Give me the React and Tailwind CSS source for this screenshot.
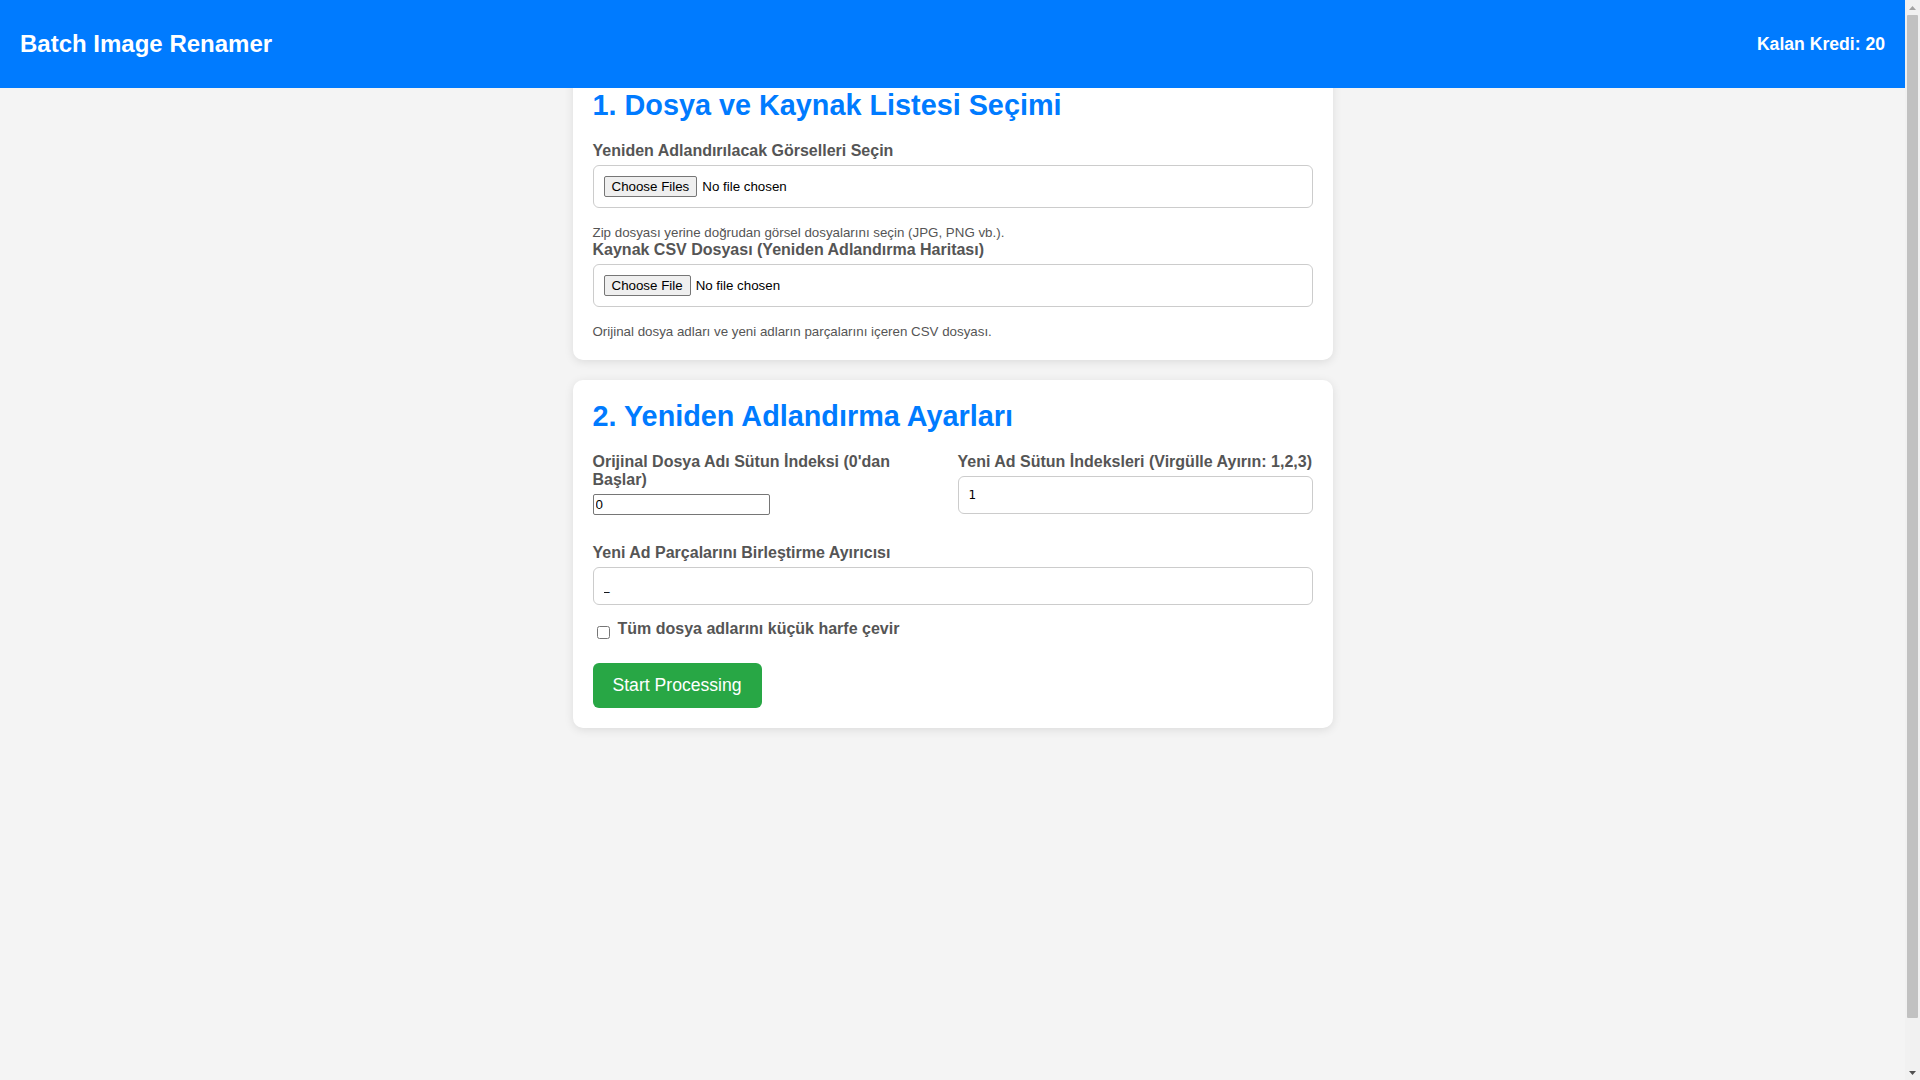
import { useState } from "react";

const labelCls = "block mb-[5px] text-[16px] font-bold text-[#555]";
const textInputCls =
  "block w-full mb-[15px] p-[10px] bg-white border border-[#ccc] rounded-[6px] text-[12px] leading-[16px] text-black font-['DejaVu_Sans',sans-serif] outline-none";
const fileInputCls =
  "block w-full mb-[15px] p-[10px] bg-white border border-[#ccc] rounded-[6px] text-[13.33px] text-black font-['Liberation_Sans',Arial,sans-serif] file:mr-[5px] file:px-[7px] file:py-[2px] file:border file:border-[#767676] file:rounded-[2px] file:bg-[#efefef] file:text-black file:text-[13.33px]";

function Help({ children }) {
  return (
    <div className="text-[16px]">
      <small className="text-[13.33px] text-[#555]">{children}</small>
    </div>
  );
}

function Card({ title, children }) {
  return (
    <section className="bg-white rounded-[10px] p-[20px] shadow-[0_2px_10px_rgba(0,0,0,0.1)]">
      <h2 className="mb-[20px] text-[28.8px] font-bold text-[#007bff]">{title}</h2>
      {children}
    </section>
  );
}

// page scrollbar, as the browser shows it when the page is taller than the window
function Scrollbar() {
  return (
    <div className="fixed top-0 right-0 z-20 w-[15px] h-screen bg-[#f1f1f1] flex flex-col items-center">
      <div className="h-[15px] flex items-center justify-center">
        <svg width="7" height="4" viewBox="0 0 7 4">
          <path d="M0 4 L3.5 0 L7 4 Z" fill="#a3a3a3" />
        </svg>
      </div>
      <div className="w-[11px] h-[1003px] rounded-[1px] bg-[#c1c1c1]" />
      <div className="flex-1" />
      <div className="h-[15px] flex items-center justify-center">
        <svg width="7" height="4" viewBox="0 0 7 4">
          <path d="M0 0 L7 0 L3.5 4 Z" fill="#505050" />
        </svg>
      </div>
    </div>
  );
}

export default function App() {
  const [startCol, setStartCol] = useState("0");
  const [newCols, setNewCols] = useState("1");
  const [sep, setSep] = useState("_");
  const [lower, setLower] = useState(false);

  return (
    <div className="min-h-[1130px] mr-[15px] bg-[#f4f4f4] text-[#333] leading-[normal] font-['Liberation_Sans',Arial,sans-serif]">
      <header className="fixed top-0 left-0 right-[15px] z-10 h-[88px] px-[20px] flex items-center justify-between bg-[#007bff] text-white">
        <h1 className="text-[24px] font-bold">Batch Image Renamer</h1>
        <div className="text-[17.6px] font-bold">Kalan Kredi: 20</div>
      </header>

      <main className="w-[760px] mx-auto pt-[69px] flex flex-col gap-[20px]">
        <Card title="1. Dosya ve Kaynak Listesi Seçimi">
          <div>
            <label className={labelCls}>Yeniden Adlandırılacak Görselleri Seçin</label>
            <input type="file" multiple accept="image/*" className={fileInputCls} />
            <Help>Zip dosyası yerine doğrudan görsel dosyalarını seçin (JPG, PNG vb.).</Help>
          </div>
          <div>
            <label className={labelCls}>Kaynak CSV Dosyası (Yeniden Adlandırma Haritası)</label>
            <input type="file" accept=".csv" className={fileInputCls} />
            <Help>Orijinal dosya adları ve yeni adların parçalarını içeren CSV dosyası.</Help>
          </div>
        </Card>

        <Card title="2. Yeniden Adlandırma Ayarları">
          <div className="grid grid-cols-[340px_1fr] gap-x-[25px] mb-[15px]">
            <div>
              <label className={labelCls}>Orijinal Dosya Adı Sütun İndeksi (0'dan Başlar)</label>
              <input
                type="number"
                value={startCol}
                onChange={(e) => setStartCol(e.target.value)}
                className="block w-[177px] h-[21px] px-[2px] bg-white border border-[#767676] rounded-[2px] text-[13.33px] text-black outline-none"
              />
            </div>
            <div>
              <label className={labelCls}>Yeni Ad Sütun İndeksleri (Virgülle Ayırın: 1,2,3)</label>
              <input
                type="text"
                value={newCols}
                onChange={(e) => setNewCols(e.target.value)}
                className={textInputCls}
              />
            </div>
          </div>

          <div>
            <label className={labelCls}>Yeni Ad Parçalarını Birleştirme Ayırıcısı</label>
            <input
              type="text"
              value={sep}
              onChange={(e) => setSep(e.target.value)}
              className={textInputCls}
            />
          </div>

          <div className="flex items-center mb-[20px]">
            <input
              type="checkbox"
              id="lower"
              checked={lower}
              onChange={(e) => setLower(e.target.checked)}
              className="w-[13px] h-[13px] m-[4px_3px_2px_4px]"
            />
            <label htmlFor="lower" className="ml-[5px] mb-[5px] text-[16px] font-bold text-[#555]">
              Tüm dosya adlarını küçük harfe çevir
            </label>
          </div>

          <button className="px-[20px] py-[12px] rounded-[6px] bg-[#28a745] text-white text-[17.6px]">
            Start Processing
          </button>
        </Card>
      </main>

      <Scrollbar />
    </div>
  );
}
